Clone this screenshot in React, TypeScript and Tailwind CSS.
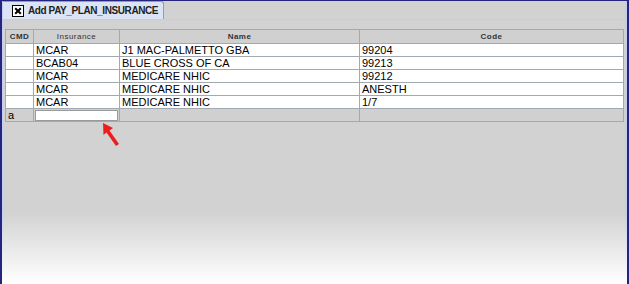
import React from 'react';

const rows = [
  { ins: 'MCAR', name: 'J1 MAC-PALMETTO GBA', code: '99204' },
  { ins: 'BCAB04', name: 'BLUE CROSS OF CA', code: '99213' },
  { ins: 'MCAR', name: 'MEDICARE NHIC', code: '99212' },
  { ins: 'MCAR', name: 'MEDICARE NHIC', code: 'ANESTH' },
  { ins: 'MCAR', name: 'MEDICARE NHIC', code: '1/7' },
];

const cell = 'border border-[#a3a9b1] h-[13px] px-[2px] leading-[12px] whitespace-nowrap overflow-hidden';
const head = 'border border-[#a3a9b1] h-[14px] text-center text-[8px] font-bold tracking-[0.06em] text-[#333] leading-[12px]';

export default function App() {
  return (
    <div className="relative w-[629px] h-[284px] overflow-hidden bg-[#d2d2d2] border-t border-l-2 border-r-2 border-[#25257d] font-['Liberation_Sans',Arial,sans-serif]">
      <div className="h-full border-l border-r-2 border-[#c3cdf0] flex flex-col">
        {/* tab strip */}
        <div className="h-[19px] flex items-end bg-[#d2d2d2] border-b border-[#c3cdf0]">
          <div className="h-[18px] w-[161px] flex items-center gap-[4px] pl-[9px] bg-[#dbe4f4] border-t border-r border-[#8c9cc4] rounded-tr-[3px]">
            <div className="shrink-0 w-[12px] h-[12px] border border-black bg-white flex items-center justify-center">
              <svg width="8" height="8" viewBox="0 0 8 8">
                <path d="M1.2 1.2 L6.8 6.8 M6.8 1.2 L1.2 6.8" stroke="#000" strokeWidth="2" />
              </svg>
            </div>
            <span className="whitespace-nowrap text-[10px] font-bold tracking-[-0.04em] text-[#222] leading-none">Add PAY_PLAN_INSURANCE</span>
          </div>
        </div>

        <div className="pt-[9px] pl-[2px]">
          <table className="table-fixed border-collapse w-[618px] text-[11px] text-black">
            <colgroup>
              <col className="w-[28px]" />
              <col className="w-[86px]" />
              <col className="w-[240px]" />
              <col className="w-[264px]" />
            </colgroup>
            <thead>
              <tr className="bg-[#d0d0d0]">
                <th className={head}>CMD</th>
                <th className={`${head} font-normal`}>Insurance</th>
                <th className={head}>Name</th>
                <th className={head}>Code</th>
              </tr>
            </thead>
            <tbody>
              {rows.map((r, i) => (
                <tr key={i} className="bg-white">
                  <td className={cell}></td>
                  <td className={cell}>{r.ins}</td>
                  <td className={cell}>{r.name}</td>
                  <td className={cell}>{r.code}</td>
                </tr>
              ))}
              <tr className="bg-[#d0d0d0]">
                <td className={cell}>a</td>
                <td className="border border-[#a3a9b1] h-[13px] p-0">
                  <div className="h-[11px] mx-[1px] bg-white border border-[#9a9a9a]" />
                </td>
                <td className={cell}></td>
                <td className={cell}></td>
              </tr>
            </tbody>
          </table>
        </div>
      </div>

      {/* pointer arrow */}
      <svg className="absolute left-[96px] top-[119px]" width="26" height="30" viewBox="0 0 26 30">
        <path d="M5 3 L15 8 L11.5 10.5 L21 24 L18 26 L8.5 12.5 L5.5 15 Z" fill="#ee1c1c" />
      </svg>

      {/* bottom fade */}
      <div className="absolute left-0 right-0 bottom-0 h-[72px] bg-gradient-to-b from-transparent to-white pointer-events-none" />
    </div>
  );
}
